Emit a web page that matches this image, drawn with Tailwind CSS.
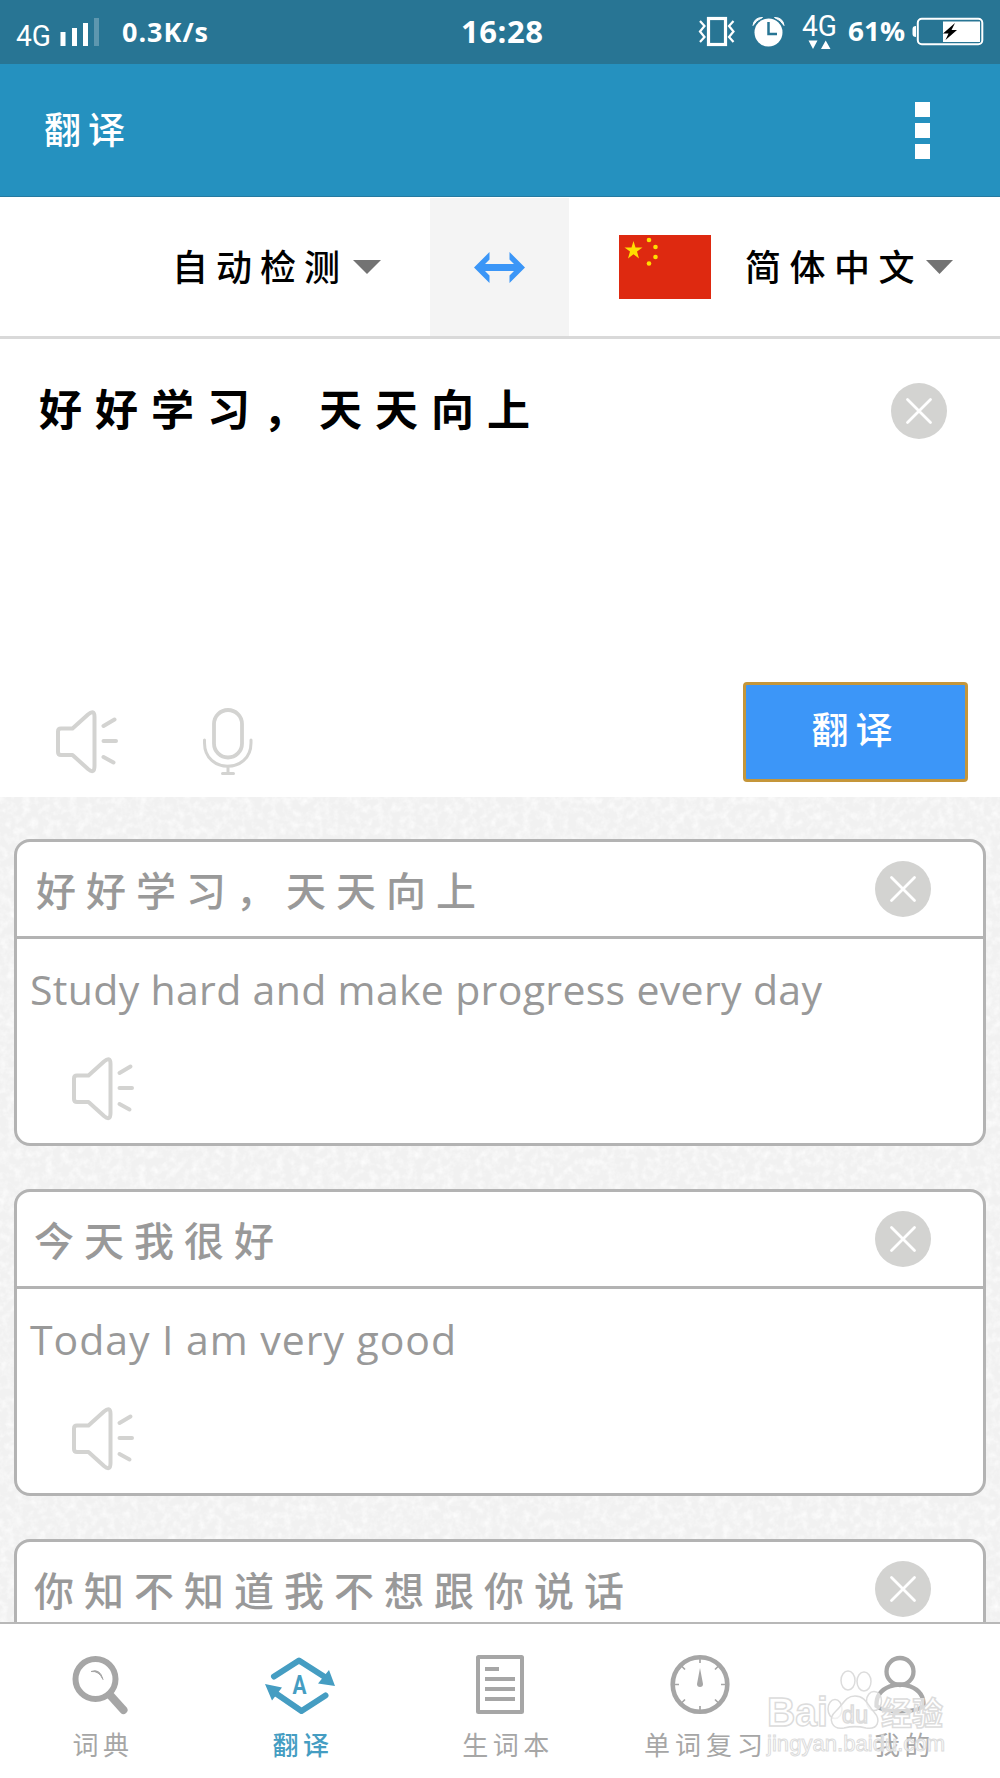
<!DOCTYPE html>
<html lang="zh-CN">
<head>
  <meta charset="utf-8" />
  <meta name="viewport" content="width=device-width, initial-scale=1" />
  <title>翻译</title>
  <script src="https://cdn.jsdelivr.net/npm/@tailwindcss/browser@4"></script>
  <style>
    body {
      font-family: "Open Sans", "Noto Sans CJK SC", sans-serif;
    }
    .kai {
      font-family: "Kaiti SC", STKaiti, KaiTi, "Noto Sans CJK SC", sans-serif;
    }
  </style>
</head>
<body class="relative w-[1000px] h-[1778px] overflow-hidden flex flex-col bg-white">
  <!-- Shared icons -->
  <svg class="hidden">
    <symbol id="icon-close" viewBox="0 0 56 56">
      <circle cx="28" cy="28" r="28" fill="#d3d3d1" />
      <path d="M16.500 16.500L39.500 39.500M39.500 16.500L16.500 39.500" stroke="#fff" stroke-width="2.800" stroke-linecap="round" />
    </symbol>
    <symbol id="icon-speaker" viewBox="0 0 64 64">
      <g fill="none" stroke="#d3d3d1" stroke-width="4" stroke-linecap="round" stroke-linejoin="round">
        <path d="M6 18.500H17.500L33 4.500Q39.500 -1 39.500 7V56Q39.500 64.500 33 59L17.500 45H6Q3 45 3 42V21.500Q3 18.500 6 18.500Z" />
        <path d="M48.500 16L59.500 9.500M48.500 31H61M48.500 47L58.500 52.500" />
      </g>
    </symbol>
  </svg>

  <!-- Status bar -->
  <div class="relative h-16 shrink-0 bg-[#287594] text-white">
    <svg class="block" width="1000" height="64" viewBox="0 0 1000 64" fill="#fff">
      <text x="16" y="46" font-family="Roboto" font-size="29" textLength="35" lengthAdjust="spacingAndGlyphs">4G</text>
      <rect x="60.500" y="32" width="5" height="14" />
      <rect x="72" y="28" width="5" height="18" />
      <rect x="83" y="23" width="5" height="23" />
      <rect x="94" y="18" width="5" height="28" fill-opacity=".25" />
      <text x="122" y="41.500" font-family="Open Sans" font-weight="700" font-size="27" textLength="86">0.3K/s</text>
      <text x="461" y="43" font-family="Open Sans" font-weight="700" font-size="31" textLength="82">16:28</text>
      <!-- vibrate -->
      <g fill="none" stroke="#fff">
        <rect x="708.500" y="18.500" width="17" height="26" stroke-width="3.200" />
        <path d="M700 21L704.500 26L700 31.500L704.500 37L700 42M733.500 21L729 26L733.500 31.500L729 37L733.500 42" stroke-width="2.200" />
      </g>
      <!-- alarm -->
      <circle cx="768.500" cy="32.500" r="14" />
      <path d="M753 25.500Q754 17.500 762.500 17.500Q756 20 753 25.500ZM784 25.500Q783 17.500 774.500 17.500Q781 20 784 25.500Z" stroke="#fff" />
      <path d="M768.500 22V34H777" fill="none" stroke="#287594" stroke-width="2.500" />
      <text x="802" y="36" font-family="Roboto" font-size="29" textLength="35" lengthAdjust="spacingAndGlyphs">4G</text>
      <path d="M808.500 40.500H817.500L813 49ZM821 49H830.500L825.700 40.500Z" />
      <text x="848" y="41" font-family="Open Sans" font-weight="700" font-size="27" textLength="57" lengthAdjust="spacingAndGlyphs">61%</text>
      <!-- battery -->
      <path d="M916 26Q912.500 26 912.500 29V34Q912.500 37 916 37Z" />
      <rect x="917.800" y="18.800" width="64.500" height="25.500" rx="4" fill="none" stroke="#fff" stroke-width="2" />
      <rect x="943" y="21.500" width="37" height="20.500" />
      <path d="M955 23L943 33.500H948.500L945.500 40L957 30H951.500Z" fill="#000" />
    </svg>
  </div>

  <!-- App bar -->
  <header class="h-[133px] shrink-0 bg-[#2591bf] border-b border-[#257aa0] flex items-center justify-between pl-[44px] pr-[70px]">
    <h1 class="kai pb-1 text-white text-[37px] leading-none font-medium tracking-[7px]">翻译</h1>
    <div class="flex flex-col gap-1.5">
      <span class="w-[15px] h-[15px] bg-white"></span>
      <span class="w-[15px] h-[15px] bg-white"></span>
      <span class="w-[15px] h-[15px] bg-white"></span>
    </div>
  </header>

  <!-- Language picker -->
  <section class="h-[142px] shrink-0 flex border-b-3 border-[#d9d9d9]">
    <div class="w-[430px] flex items-center justify-end pr-[49px]">
      <span class="kai pb-1 text-[36px] leading-none font-medium tracking-[8px] text-black">自动检测</span>
      <svg class="ml-[5px]" width="28" height="14" viewBox="0 0 28 14"><path d="M0 0H28L14 14Z" fill="#737373" /></svg>
    </div>
    <div class="w-[139px] bg-[#f4f4f4] mt-px flex items-center justify-center">
      <svg width="51" height="31" viewBox="0 0 51 31" fill="#3b96f7"><path d="M0 15.500L15.500 0V7.500L11 12H40L35.500 7.500V0L51 15.500L35.500 31V23.500L40 19H11L15.500 23.500V31Z" /></svg>
    </div>
    <div class="flex-1 flex items-center pl-[50px]">
      <svg class="mt-px" width="92" height="64" viewBox="0 0 92 64">
        <rect width="92" height="64" fill="#de2910" />
        <g fill="#ffde00">
          <path d="M14.500 6L16.500 12.500H23.500L18 16.500L20 23.500L14.500 19.200L9 23.500L11 16.500L5.500 12.500H12.500Z" />
          <circle cx="30" cy="5" r="2.300" />
          <circle cx="36.500" cy="12" r="2.300" />
          <circle cx="36.500" cy="22" r="2.300" />
          <circle cx="30" cy="28.500" r="2.300" />
        </g>
      </svg>
      <span class="kai pb-1 ml-[34px] text-[36px] leading-none font-medium tracking-[8.500px] text-black">简体中文</span>
      <svg class="ml-[3px]" width="27" height="14" viewBox="0 0 27 14"><path d="M0 0H27L13.500 14Z" fill="#737373" /></svg>
    </div>
  </section>

  <!-- Input -->
  <section class="h-[458px] shrink-0 flex flex-col justify-between pl-[38px] pr-8 pb-[15px]">
    <div class="flex justify-between pt-[44px] pr-[21px]">
      <p class="kai pt-0.5 pl-px text-[43px] leading-[44px] font-bold tracking-[13px] text-black">好好学习，天天向上</p>
      <svg width="56" height="56"><use href="#icon-close" /></svg>
    </div>
    <div class="flex items-center">
      <svg class="ml-[17px] mt-[20px]" width="64" height="64"><use href="#icon-speaker" /></svg>
      <svg class="ml-[83px] mt-[20px]" width="51" height="68" viewBox="0 0 51 68" fill="none" stroke="#d3d3d1" stroke-width="3.800" stroke-linecap="round">
        <rect x="12" y="2" width="28" height="47.500" rx="14" />
        <path d="M2.500 32V35C2.500 66 49 66 49 35V32M26 58V65M20.500 65.500H31.500" stroke-width="3" />
      </svg>
      <button class="kai ml-auto w-[225px] h-[100px] rounded-[4px] border-3 border-[#c5963a] bg-[#3c96f8] text-white text-[37px] leading-none font-medium tracking-[7px] pb-2">翻译</button>
    </div>
  </section>

  <!-- History -->
  <main class="relative flex-1 overflow-hidden bg-[#f1f1f1]">
    <!-- paper grain -->
    <svg class="absolute inset-0 w-full h-full">
      <filter id="grain">
        <feTurbulence type="fractalNoise" baseFrequency=".13" numOctaves="3" seed="4" />
        <feColorMatrix values="0 0 0 0 1  0 0 0 0 1  0 0 0 0 1  1.600 0 0 0 -.65" />
      </filter>
      <rect width="100%" height="100%" filter="url(#grain)" />
    </svg>
    <div class="relative flex flex-col gap-[43px] px-3.5 pt-[42px]">
      <article class="h-[307px] shrink-0 bg-white border-3 border-[#b3b3b3] rounded-[16px]">
        <div class="h-[97px] flex items-center justify-between pl-[19px] pr-[52px] border-b-3 border-[#b3b3b3]">
          <h2 class="kai text-[40px] leading-none font-medium tracking-[10px] text-[#999]">好好学习，天天向上</h2>
          <svg width="56" height="56"><use href="#icon-close" /></svg>
        </div>
        <svg class="block" width="900" height="110" viewBox="0 0 900 110">
          <text x="13" y="66" font-size="41" textLength="792" fill="#999">Study hard and make progress every day</text>
        </svg>
        <svg class="ml-[54px] mt-2" width="64" height="64"><use href="#icon-speaker" /></svg>
      </article>
      <article class="h-[307px] shrink-0 bg-white border-3 border-[#b3b3b3] rounded-[16px]">
        <div class="h-[97px] flex items-center justify-between pl-[17px] pr-[52px] border-b-3 border-[#b3b3b3]">
          <h2 class="kai text-[40px] leading-none font-medium tracking-[10px] text-[#999]">今天我很好</h2>
          <svg width="56" height="56"><use href="#icon-close" /></svg>
        </div>
        <svg class="block" width="900" height="110" viewBox="0 0 900 110">
          <text x="13" y="66" font-size="41" textLength="426" fill="#999">Today I am very good</text>
        </svg>
        <svg class="ml-[54px] mt-2" width="64" height="64"><use href="#icon-speaker" /></svg>
      </article>
      <article class="h-[307px] shrink-0 bg-white border-3 border-[#b3b3b3] rounded-[16px]">
        <div class="h-[97px] flex items-center justify-between pl-[17px] pr-[52px] border-b-3 border-[#b3b3b3]">
          <h2 class="kai text-[40px] leading-none font-medium tracking-[10px] text-[#999]">你知不知道我不想跟你说话</h2>
          <svg width="56" height="56"><use href="#icon-close" /></svg>
        </div>
      </article>
    </div>
  </main>

  <!-- Tab bar -->
  <nav class="h-[156px] shrink-0 grid grid-cols-5 border-t-2 border-[#b8b8b8] bg-white text-[#a6a6a6] kai text-[26px] leading-none tracking-[4.500px]">
    <a href="#" class="flex flex-col items-center pt-[30px]">
      <svg width="60" height="62" viewBox="0 0 60 62" fill="none" stroke="currentColor">
        <circle cx="25.500" cy="25" r="20" stroke-width="6" />
        <path d="M40 41L53.500 56" stroke-width="8" stroke-linecap="round" />
        <path d="M21 17.500Q30 14 33 25.500Q29 16.500 21 17.500Z" stroke-width="1" fill="currentColor" />
      </svg>
      <span class="mt-[15px] ml-[6px]">词典</span>
    </a>
    <a href="#" class="flex flex-col items-center pt-[30px] text-[#459dc2]">
      <svg width="72" height="62" viewBox="0 0 72 62" fill="none" stroke="currentColor" stroke-width="6">
        <path d="M10 22.500L35 6.500L60 22.500M61.500 41.500L37.500 57L12 39.500" stroke-linecap="round" stroke-linejoin="round" />
        <path d="M65 16L71 32L54 29.500ZM1 30L18 33.500L8 46.500Z" fill="currentColor" stroke="none" />
        <text x="35.500" y="40" text-anchor="middle" font-family="Roboto" font-size="25" font-weight="700" letter-spacing="0" fill="currentColor" stroke="none" textLength="14" lengthAdjust="spacingAndGlyphs">A</text>
      </svg>
      <span class="mt-[15px] ml-[6px] font-medium">翻译</span>
    </a>
    <a href="#" class="flex flex-col items-center pt-[30px]">
      <svg width="60" height="62" viewBox="0 0 60 62" fill="none" stroke="currentColor" stroke-width="4">
        <rect x="8" y="3" width="44" height="55" rx=".5" />
        <path d="M15 15H29M15 25H45M15 35H45M15 45H45" stroke-width="3.800" />
      </svg>
      <span class="mt-[15px] ml-[16px]">生词本</span>
    </a>
    <a href="#" class="flex flex-col items-center pt-[30px]">
      <svg width="60" height="62" viewBox="0 0 60 62" fill="none" stroke="currentColor">
        <circle cx="30" cy="30.500" r="27.300" stroke-width="4.600" />
        <path d="M30 5V9M30 52V56M4.500 30.500H9M51 30.500H55.500M11.500 12L15 15.500M45 45.500L48.500 49M48.500 12L45 15.500M15 45.500L11.500 49" stroke-width="1.700" />
        <path d="M30 14L33 30A3 3 0 1 1 27 30Z" fill="currentColor" stroke="none" />
      </svg>
      <span class="mt-[15px] ml-[12px] tracking-[5px] whitespace-nowrap">单词复习</span>
    </a>
    <a href="#" class="flex flex-col items-center pt-[30px]">
      <svg width="60" height="62" viewBox="0 0 60 62" fill="none" stroke="currentColor" stroke-width="4.300">
        <circle cx="30" cy="17.500" r="13.500" />
        <path d="M19.500 32.500C10.500 36 6 43 6.500 52C14 59 46 59 53.500 52C54 43 49.500 36 40.500 32.500C34 30 26 30 19.500 32.500Z" />
      </svg>
      <span class="mt-[15px] ml-[9px]">我的</span>
    </a>
  </nav>

  <!-- Watermark -->
  <svg class="absolute left-[760px] top-[1665px]" width="200" height="105" viewBox="0 0 200 105" fill="#fff" fill-opacity=".6" stroke="#dcdcdc" stroke-width="1.500">
    <text x="7" y="61" font-family="Liberation Sans" font-weight="700" font-size="41" textLength="61" lengthAdjust="spacingAndGlyphs">Bai</text>
    <ellipse cx="75" cy="44" rx="7" ry="9.500" />
    <ellipse cx="88" cy="15.500" rx="7" ry="9.500" />
    <ellipse cx="104" cy="16.500" rx="7" ry="9.500" />
    <ellipse cx="114" cy="36" rx="7.500" ry="9.500" />
    <path d="M95 31C106 31 108 41 114 47C122 56 117 65 106 63C98 61 92 61 84 63C72 65 67 54 76 46C83 40 85 31 95 31Z" />
    <text x="82" y="58" font-family="Liberation Sans" font-size="23" textLength="26">du</text>
    <text x="121" y="60" font-family="Noto Sans CJK SC" font-weight="700" font-size="32" textLength="62" lengthAdjust="spacingAndGlyphs">经验</text>
    <text x="7" y="86" font-family="Liberation Sans" font-size="22" stroke-width="1" textLength="178">jingyan.baidu.com</text>
  </svg>
</body>
</html>
